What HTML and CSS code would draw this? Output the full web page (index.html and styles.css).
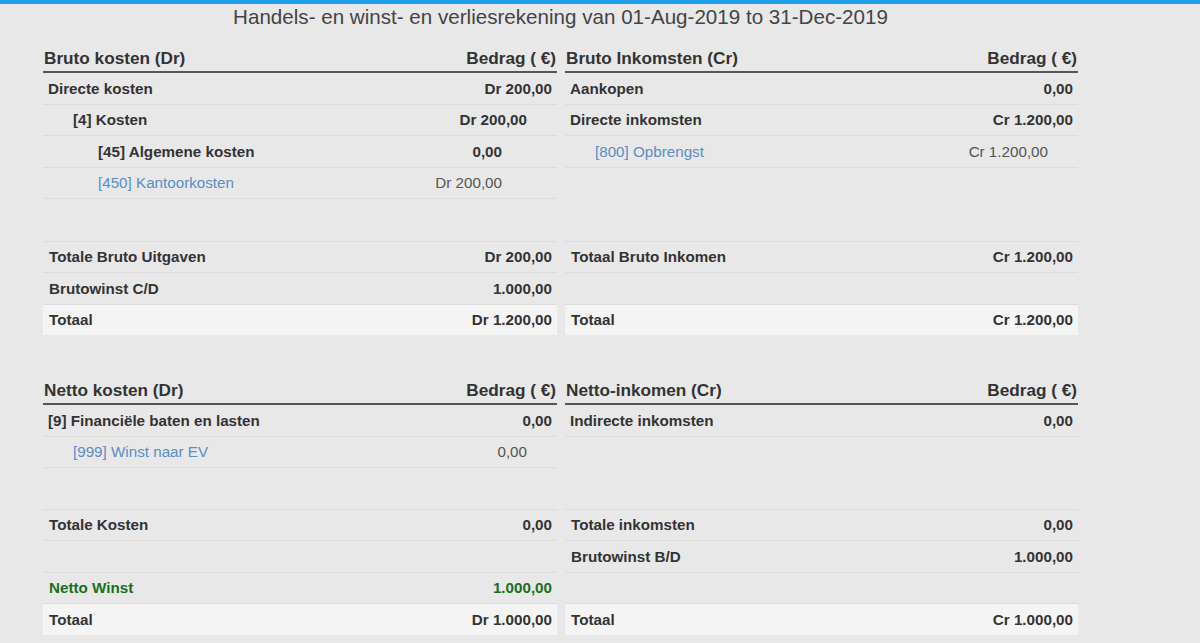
FILE: index.html
```html
<!DOCTYPE html>
<html lang="nl">
<head>
<meta charset="utf-8">
<title>Handels- en winst- en verliesrekening</title>
<link rel="stylesheet" href="styles.css">
</head>
<body>
<div class="topbar"></div>
<main class="report">
  <h1 class="title">Handels- en winst- en verliesrekening van 01-Aug-2019 to 31-Dec-2019</h1>

  <section class="section">
    <div class="head"><span>Bruto kosten (Dr)</span><span>Bedrag ( €)</span></div>
    <div class="head"><span>Bruto Inkomsten (Cr)</span><span>Bedrag ( €)</span></div>

    <div class="body">
      <div class="row"><span>Directe kosten</span><span>Dr 200,00</span></div>
      <div class="row lvl1"><span>[4] Kosten</span><span>Dr 200,00</span></div>
      <div class="row lvl2"><span>[45] Algemene kosten</span><span>0,00</span></div>
      <div class="row lvl2 link"><span class="name">[450] Kantoorkosten</span><span>Dr 200,00</span></div>
    </div>
    <div class="body">
      <div class="row"><span>Aankopen</span><span>0,00</span></div>
      <div class="row"><span>Directe inkomsten</span><span>Cr 1.200,00</span></div>
      <div class="row lvl1 link"><span class="name">[800] Opbrengst</span><span>Cr 1.200,00</span></div>
    </div>

    <div class="totals first">
      <div class="trow"><span>Totale Bruto Uitgaven</span><span>Dr 200,00</span></div>
      <div class="trow"><span>Brutowinst C/D</span><span>1.000,00</span></div>
      <div class="trow grand"><span>Totaal</span><span>Dr 1.200,00</span></div>
    </div>
    <div class="totals first">
      <div class="trow"><span>Totaal Bruto Inkomen</span><span>Cr 1.200,00</span></div>
      <div class="trow"><span></span><span></span></div>
      <div class="trow grand"><span>Totaal</span><span>Cr 1.200,00</span></div>
    </div>
  </section>

  <section class="section second">
    <div class="head"><span>Netto kosten (Dr)</span><span>Bedrag ( €)</span></div>
    <div class="head"><span>Netto-inkomen (Cr)</span><span>Bedrag ( €)</span></div>

    <div class="body">
      <div class="row"><span>[9] Financiële baten en lasten</span><span>0,00</span></div>
      <div class="row lvl1 link"><span class="name">[999] Winst naar EV</span><span>0,00</span></div>
    </div>
    <div class="body">
      <div class="row"><span>Indirecte inkomsten</span><span>0,00</span></div>
    </div>

    <div class="totals last">
      <div class="trow"><span>Totale Kosten</span><span>0,00</span></div>
      <div class="trow"><span></span><span></span></div>
      <div class="trow green"><span>Netto Winst</span><span>1.000,00</span></div>
      <div class="trow grand"><span>Totaal</span><span>Dr 1.000,00</span></div>
    </div>
    <div class="totals last">
      <div class="trow"><span>Totale inkomsten</span><span>0,00</span></div>
      <div class="trow"><span>Brutowinst B/D</span><span>1.000,00</span></div>
      <div class="trow"><span></span><span></span></div>
      <div class="trow grand"><span>Totaal</span><span>Cr 1.000,00</span></div>
    </div>
  </section>
</main>
</body>
</html>
```

FILE: styles.css
```css
* { box-sizing: border-box; }

html, body {
  margin: 0;
  padding: 0;
  background: #e8e8e8;
  font-family: "Liberation Sans", Arial, sans-serif;
  color: #333;
  overflow: hidden;
}

.topbar {
  height: 4px;
  background: #1d9fea;
}

.report {
  width: 1035px;
  margin-left: 43px;
}

.title {
  margin: 0 0 16px 0;
  height: 26px;
  line-height: 26px;
  font-size: 20.6px;
  font-weight: normal;
  color: #444;
  text-align: center;
}

.section {
  display: grid;
  grid-template-columns: 514px 513px;
  column-gap: 8px;
}

.section.second {
  margin-top: 43px;
}

.head {
  display: flex;
  justify-content: space-between;
  align-items: center;
  height: 27px;
  padding: 0 1px 0 1px;
  border-bottom: 2px solid #555;
  font-size: 17.2px;
  font-weight: bold;
  color: #333;
}

.row, .trow {
  display: flex;
  justify-content: space-between;
  align-items: center;
  height: 31.5px;
  font-size: 15.2px;
  font-weight: bold;
}

.row {
  padding: 0 5px;
  border-bottom: 1px solid #dcdcdc;
}

.row.lvl1 { padding-left: 30px; padding-right: 30px; }
.row.lvl2 { padding-left: 55px; padding-right: 55px; }

.row.link { font-weight: normal; color: #555; }
.row.link .name { color: #5b8cc7; }

.totals.first { margin-top: 41.5px; }
.totals.last { margin-top: 40.5px; }

.trow {
  padding: 0 5px 0 6px;
  border-top: 1px solid #dcdcdc;
}

.trow.grand { background: #f4f4f4; }
.trow.green { color: #1a701a; }
```
